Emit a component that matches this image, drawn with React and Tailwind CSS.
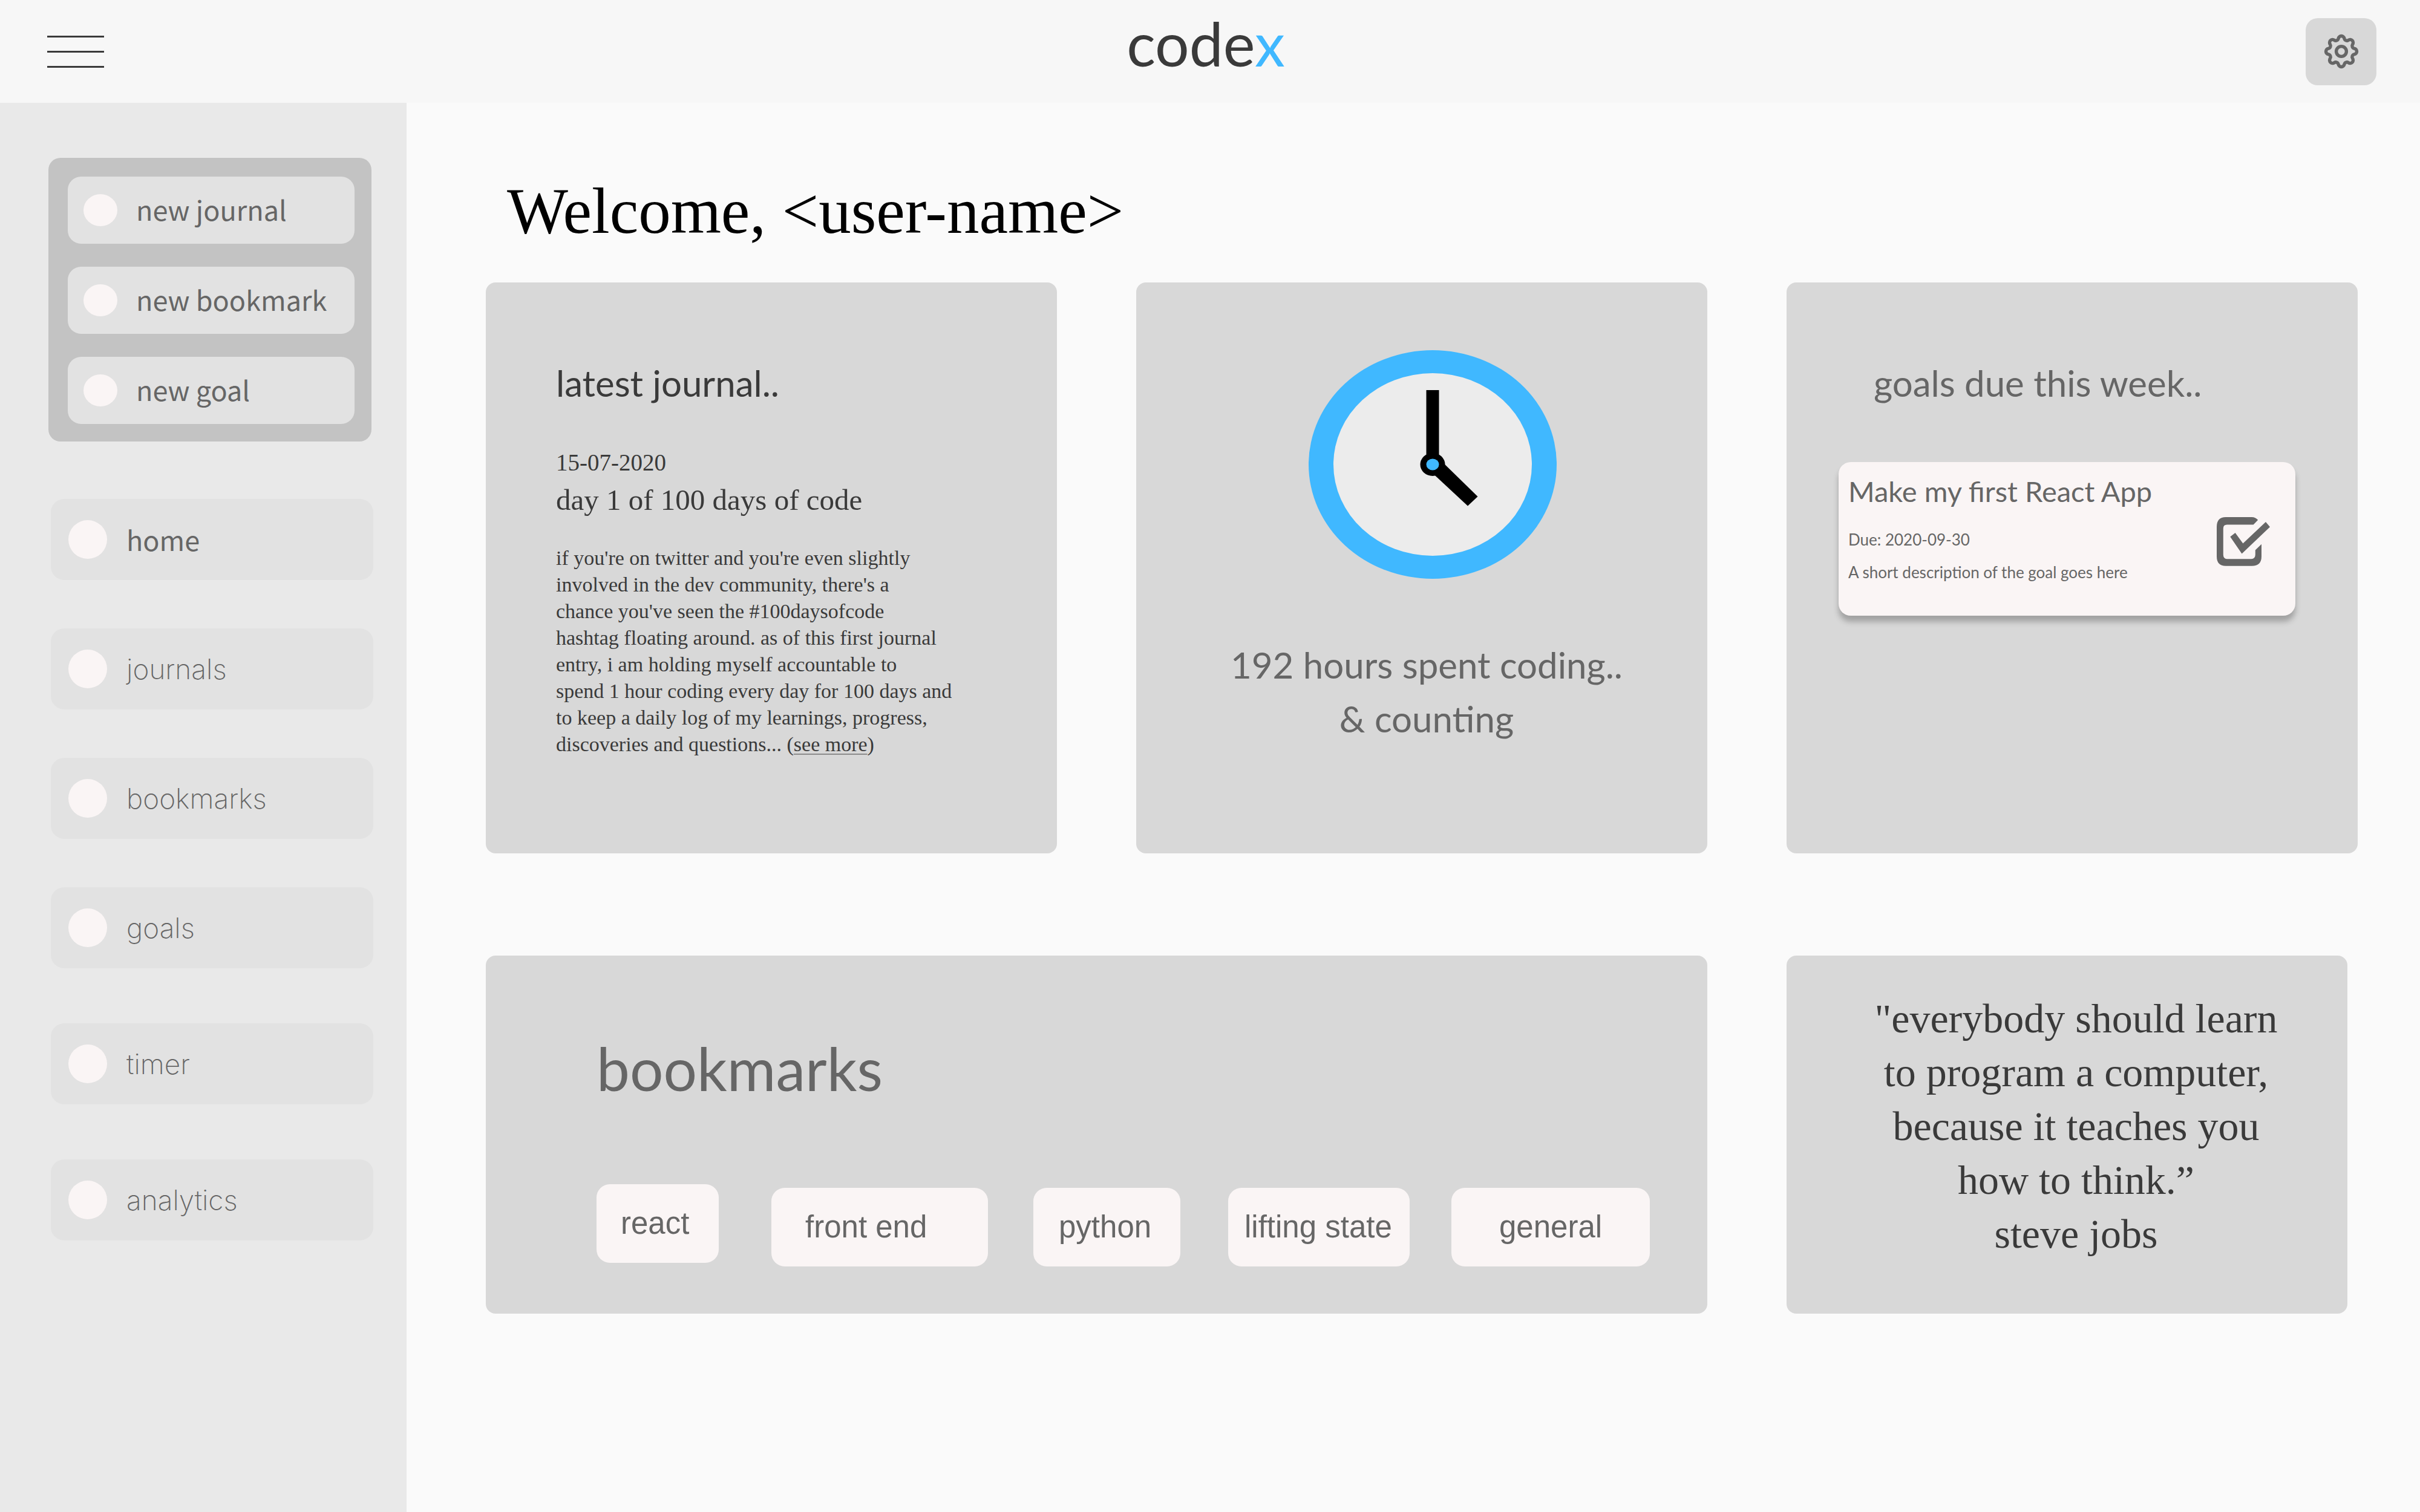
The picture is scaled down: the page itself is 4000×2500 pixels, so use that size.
import React from "react";

const QUICK_ACTIONS = ["new journal", "new bookmark", "new goal"];

const NAV_GROUPS = [
  ["home", "journals", "bookmarks", "goals"],
  ["timer"],
  ["analytics"],
];

const BOOKMARKS = [
  { label: "react", box: "self-start w-[202px] pl-[40px]" },
  { label: "front end", box: "self-end w-[358px] ml-[87px] pl-[56px]" },
  { label: "python", box: "self-end w-[243px] ml-[75px] pl-[42px]" },
  { label: "lifting state", box: "self-end w-[300px] ml-[79px] pl-[27px]" },
  { label: "general", box: "self-end w-[328px] ml-[69px] pl-[79px]" },
];

const card = "rounded-[16px] bg-[#d8d8d8]";

/* Eight rounded teeth joined by concave valleys. */
function gearPath() {
  const at = (r, deg) => {
    const a = (deg * Math.PI) / 180;
    return [30 + r * Math.sin(a), 30 - r * Math.cos(a)];
  };
  const mix = (p, q) => {
    const t = 5 / 9.3;
    return `${(p[0] + (q[0] - p[0]) * t).toFixed(2)} ${(p[1] + (q[1] - p[1]) * t).toFixed(2)}`;
  };
  let d = "";
  for (let i = 0; i < 8; i++) {
    const peak = at(20.2, i * 45);
    const before = at(24, i * 45 - 22.5);
    const after = at(24, i * 45 + 22.5);
    d += i === 0 ? `M${mix(peak, before)}` : `A4.3 4.3 0 0 0 ${mix(peak, before)}`;
    d += `A5 5 0 0 1 ${mix(peak, after)}`;
  }
  return `${d}A4.3 4.3 0 0 0 ${mix(at(20.2, 0), at(24, -22.5))}Z`;
}

const GEAR = gearPath();

function GearIcon() {
  return (
    <svg viewBox="0 0 60 60" className="size-[60px]" fill="none" stroke="#666666" strokeWidth="5.4" aria-hidden="true">
      <path d={GEAR} />
      <circle cx="30" cy="30" r="8.4" />
    </svg>
  );
}

function Clock() {
  return (
    <svg viewBox="0 0 410 378" className="w-[410px]" role="img" aria-label="clock">
      <ellipse cx="205" cy="189" rx="205" ry="189" fill="#40b8ff" />
      <ellipse cx="205" cy="189" rx="164" ry="151" fill="#ececec" />
      <rect x="194.5" y="66" width="21" height="123" />
      <path d="M215 179L279.500 242L263 257.500L198 197Z" />
      <ellipse cx="205" cy="189" rx="20.500" ry="19" />
      <ellipse cx="205" cy="189" rx="10.500" ry="9.500" fill="#40b8ff" />
    </svg>
  );
}

function CheckIcon() {
  return (
    <svg viewBox="0 0 89 81" className="w-[89px]" fill="#666666" aria-hidden="true">
      <path d="M15 0H58Q64 0 68.200 4.700L60.600 12.600H17Q10.800 12.600 10.800 19V62Q10.800 69.200 17 69.200H57Q63.800 69.200 63.800 62V54.600L74 44.700V65Q74 80.700 58 80.700H15Q0 80.700 0 65V16Q0 0 15 0Z" />
      <path d="M30.600 26.100L22.300 32.400L41.500 60.500L88 16.200L81 7.900L43.400 43.500Z" />
    </svg>
  );
}

function Header() {
  return (
    <header className="grid min-h-[170px] grid-cols-[1fr_auto_1fr] items-center bg-[#f7f7f7] pl-[78px] pr-[72px]">
      <button type="button" aria-label="menu" className="flex w-[94px] flex-col gap-[22px]">
        <span className="h-[3px] bg-[#3a3a3a]" />
        <span className="h-[3px] bg-[#3a3a3a]" />
        <span className="h-[3px] bg-[#3a3a3a]" />
      </button>
      <a href="#home" className="pb-7 pr-5 font-['Lato',sans-serif] text-[100px] leading-[112px] text-[#3a3a3a]">
        code<span className="text-[#40b8ff]">x</span>
      </a>
      <button type="button" aria-label="settings" className="flex h-[111px] w-[117px] items-center justify-center justify-self-end rounded-[20px] bg-[#d8d8d8]">
        <GearIcon />
      </button>
    </header>
  );
}

function Sidebar() {
  return (
    <aside className="w-[672px] shrink-0 bg-[#e9e9e9] pt-[91px] pr-[55px] pl-[80px] text-[#666666]">
      <div className="mr-[3px] flex flex-col gap-[38px] rounded-[20px] bg-[#c3c3c3] pt-[31px] pr-[28px] pb-[29px] pl-[32px] font-['Noto_Sans_CJK_SC',sans-serif] text-[45px]">
        {QUICK_ACTIONS.map((label) => (
          <button key={label} type="button" className="flex h-[111px] items-center gap-[31px] rounded-[22px] bg-[#e2e2e2] pl-[26px]">
            <span className="h-[53px] w-[56px] rounded-[50%] bg-[#faf5f5]" />
            <span className="pb-1">{label}</span>
          </button>
        ))}
      </div>
      <nav className="mt-[95px] ml-[4px] flex flex-col gap-[91px]">
        {NAV_GROUPS.map((group) => (
          <div key={group[0]} className="flex flex-col gap-[80px]">
            {group.map((label) => (
              <a key={label} href={`#${label}`} className="flex h-[134px] items-center gap-[32px] rounded-[22px] bg-[#e2e2e2] pl-[29px]">
                <span className="size-[64px] rounded-full bg-[#faf5f5]" />
                <span
                  className={
                    label === "home"
                      ? "font-['Noto_Sans_CJK_SC',sans-serif] text-[45px]"
                      : "font-['Inter',sans-serif] text-[46px] font-extralight"
                  }
                >
                  {label}
                </span>
              </a>
            ))}
          </div>
        ))}
      </nav>
    </aside>
  );
}

function JournalCard() {
  return (
    <section className={`${card} aspect-square pt-[130px] pl-[116px] font-['Liberation_Serif',serif] text-[#3a3a3a]`}>
      <h2 className="font-['Lato',sans-serif] text-[60px] leading-[72px]">latest journal..</h2>
      <p className="mt-[72px] text-[39px] leading-[48px]">15-07-2020</p>
      <h3 className="mt-2 text-[49px] leading-[60px]">day 1 of 100 days of code</h3>
      <p className="mt-11 text-[34px] leading-[44px]">
        if you're on twitter and you're even slightly
        <br />
        involved in the dev community, there's a
        <br />
        chance you've seen the #100daysofcode
        <br />
        hashtag floating around. as of this first journal
        <br />
        entry, i am holding myself accountable to
        <br />
        spend 1 hour coding every day for 100 days and
        <br />
        to keep a daily log of my learnings, progress,
        <br />
        discoveries and questions... (
        <a href="#journals" className="underline decoration-[#8c8c8c] decoration-2 underline-offset-4">see more</a>)
      </p>
    </section>
  );
}

function HoursCard() {
  return (
    <section className={`${card} flex aspect-square flex-col items-center pt-[112px] pl-4`}>
      <div className="pl-5">
        <Clock />
      </div>
      <p className="mt-[98px] text-center font-['Lato',sans-serif] text-[60px] leading-[89px] text-[#666666]">
        192 hours spent coding..
        <br />
        &amp; counting
      </p>
    </section>
  );
}

function GoalsCard() {
  return (
    <section className={`${card} aspect-square pt-[130px] font-['Lato',sans-serif] text-[#666666]`}>
      <h2 className="pl-[144px] text-[60px] leading-[72px]">goals due this week..</h2>
      <div className="mt-[95px] mr-[103px] ml-[86px] flex items-start justify-between rounded-[20px] bg-[#faf5f5] pt-5 pr-[41px] pb-[54px] pl-4 shadow-[0_10px_10px_rgba(0,0,0,0.25)]">
        <div>
          <h3 className="text-[47px] leading-[56px]">Make my first React App</h3>
          <p className="mt-[34px] text-[26px] leading-[36px]">Due: 2020-09-30</p>
          <p className="mt-[18px] text-[26px] leading-[36px]">A short description of the goal goes here</p>
        </div>
        <label className="mt-[71px] block cursor-pointer">
          <input type="checkbox" defaultChecked aria-label="Make my first React App" className="sr-only" />
          <CheckIcon />
        </label>
      </div>
    </section>
  );
}

function BookmarksCard() {
  return (
    <section className={`${card} col-span-2 min-h-[592px] pt-[130px] pl-[183px] text-[#666666]`}>
      <h2 className="font-['Lato',sans-serif] text-[98px] leading-[112px]">bookmarks</h2>
      <div className="mt-[136px] flex h-[136px]">
        {BOOKMARKS.map(({ label, box }) => (
          <button
            key={label}
            type="button"
            className={`${box} rounded-[22px] bg-[#faf5f5] py-8 text-left font-['Liberation_Sans',sans-serif] text-[51px] leading-[66px] whitespace-nowrap`}
          >
            {label}
          </button>
        ))}
      </div>
    </section>
  );
}

function QuoteCard() {
  return (
    <blockquote className={`${card} mr-[17px] min-h-[592px] pt-[60px] pl-[30px] text-center font-['Liberation_Serif',serif] text-[68px] leading-[89px] text-[#3a3a3a]`}>
      "everybody should learn
      <br />
      to program a computer,
      <br />
      because it teaches you
      <br />
      how to think.”
      <footer>steve jobs</footer>
    </blockquote>
  );
}

export default function App() {
  return (
    <div className="flex min-h-screen flex-col bg-[#fafafa]">
      <Header />
      <div className="flex flex-1">
        <Sidebar />
        <main className="flex-1 pt-[119px] pr-[103px] pb-[121px] pl-[131px]">
          <h1 className="pl-[35px] font-['Liberation_Serif',serif] text-[107px] leading-[120px] text-black">Welcome, &lt;user-name&gt;</h1>
          <div className="mt-[58px] grid grid-cols-3 gap-x-[131px] gap-y-[169px]">
            <JournalCard />
            <HoursCard />
            <GoalsCard />
            <BookmarksCard />
            <QuoteCard />
          </div>
        </main>
      </div>
    </div>
  );
}
